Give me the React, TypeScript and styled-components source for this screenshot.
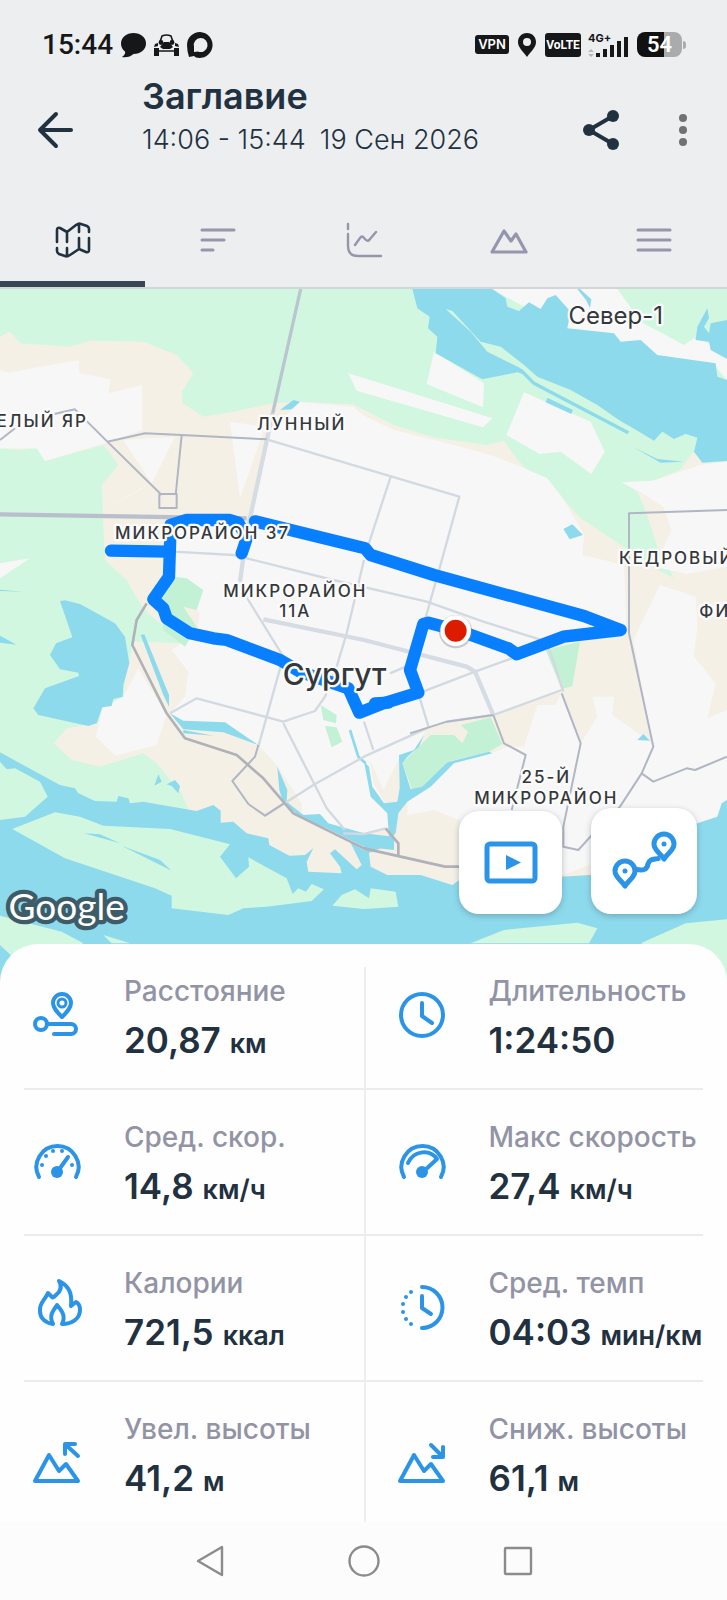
import React from 'react';
import styled, { createGlobalStyle } from 'styled-components';

const ink = '#22313f';
const muted = '#9294a6';
const blue = '#2b94e6';
const chrome = '#eceef0';

const GlobalStyle = createGlobalStyle`
  * { box-sizing: border-box; }
  body { margin: 0; background: #fff; font-family: Inter, "Noto Sans", sans-serif; color: ${ink}; }
  button { border: 0; padding: 0; background: none; font: inherit; color: inherit; cursor: pointer; }
  svg { display: block; }
  h1, p, dl, dt, dd { margin: 0; }
`;

const Screen = styled.div`
  display: flex;
  flex-direction: column;
  min-height: 100vh;
  background: #fff;
`;

/* ---------- status bar ---------- */

const StatusBar = styled.div`
  display: flex;
  align-items: center;
  justify-content: space-between;
  height: 72px;
  padding: 17px 41px 0 42px;
  background: ${chrome};
  color: #151719;
`;

const StatusGroup = styled.div<{ $gap: number }>`
  display: flex;
  align-items: center;
  gap: ${(p) => p.$gap}px;
`;

const Clock = styled.span`
  font: 500 28px/32px Roboto, sans-serif;
`;

const Badge = styled.span<{ $tall?: boolean }>`
  display: flex;
  align-items: center;
  justify-content: center;
  width: ${(p) => (p.$tall ? 36 : 34)}px;
  height: ${(p) => (p.$tall ? 24 : 19)}px;
  border-radius: 3px;
  background: #151719;
  color: #fff;
  font: ${(p) => (p.$tall ? '700 12px/24px Roboto' : '600 13px/19px Inter')}, sans-serif;
`;

const Signal = styled.div`
  display: flex;
  flex-direction: column;
  width: 42px;
  height: 24px;
  font: 700 11px/10px Inter, sans-serif;
`;

const SignalBars = styled.svg`
  flex: none;
  width: 42px;
  height: 22px;
  margin-top: -8px;
`;

const Battery = styled.div`
  display: flex;
  align-items: center;
  gap: 1px;
`;

const BatteryBody = styled.span`
  display: block;
  width: 45px;
  height: 25px;
  border-radius: 8px;
  background: linear-gradient(90deg, #111 60%, #a9abac 60%);
  color: #fff;
  font: 600 22px/25px Roboto, sans-serif;
  text-align: center;
`;

const BatteryTip = styled.span`
  width: 3px;
  height: 8px;
  border-radius: 0 3px 3px 0;
  background: #a9abac;
`;

/* ---------- header ---------- */

const Header = styled.header`
  display: flex;
  align-items: center;
  height: 116px;
  padding: 0 22px 0 33px;
  background: ${chrome};
`;

const Titles = styled.div`
  display: flex;
  flex: 1;
  flex-direction: column;
  align-self: flex-start;
  gap: 5px;
  padding: 2px 0 0 65px;
`;

const Title = styled.h1`
  font-size: 36px;
  font-weight: 600;
  line-height: 44px;
`;

const Subtitle = styled.p`
  display: flex;
  gap: 14px;
  font-size: 27px;
  font-weight: 300;
  line-height: 34px;
`;

const IconButton = styled.button`
  display: flex;
  align-items: center;
  justify-content: center;
  width: 44px;
  height: 44px;
`;

const HeaderActions = styled.div`
  display: flex;
  gap: 38px;
`;

/* ---------- tabs ---------- */

const Tabs = styled.nav`
  display: flex;
  border-bottom: 2px solid #d2d6d9;
  background: ${chrome};
`;

const Tab = styled.button<{ $active?: boolean }>`
  display: flex;
  flex: 1;
  justify-content: center;
  padding: 30px 0 19px;
  border-bottom: 6px solid ${(p) => (p.$active ? '#374555' : 'transparent')};
  color: ${(p) => (p.$active ? ink : '#9496aa')};
`;

/* ---------- map ---------- */

const MapArea = styled.section`
  position: relative;
  height: 695px;
  overflow: hidden;
`;

const MapSvg = styled.svg`
  width: 100%;
  height: 100%;
`;

const Place = styled.text`
  font-family: Inter, sans-serif;
  font-weight: 500;
  fill: #35383b;
  stroke: #fbfbfb;
  stroke-width: 14px;
  stroke-linejoin: round;
  paint-order: stroke;
`;

const District = styled(Place)`
  font-size: 51px;
  letter-spacing: 6px;
`;

const Town = styled(Place)<{ $city?: boolean }>`
  font-size: ${(p) => (p.$city ? 90 : 72)}px;
  font-weight: ${(p) => (p.$city ? 500 : 400)};
`;

const Brand = styled.text`
  font: 400 111px Lato, sans-serif;
  fill: #fff;
  stroke: #3d5c68;
  stroke-width: 26px;
  stroke-linejoin: round;
  paint-order: stroke;
`;

const MapActions = styled.div`
  position: absolute;
  right: 30px;
  bottom: 70px;
  display: flex;
  align-items: flex-end;
  gap: 29px;
`;

const MapButton = styled.button<{ $size: number }>`
  display: flex;
  align-items: center;
  justify-content: center;
  width: ${(p) => p.$size}px;
  height: ${(p) => p.$size}px;
  border-radius: 20px;
  background: #fff;
  color: ${blue};
  box-shadow: 0 2px 6px rgba(40, 60, 80, 0.3);
`;

/* ---------- stats ---------- */

const Sheet = styled.section`
  position: relative;
  margin-top: -40px;
  padding: 23px 24px 0;
  border-radius: 38px 38px 0 0;
  background: #fefefe;
`;

const StatGrid = styled.dl`
  display: grid;
  grid-template-columns: 1fr 1fr;
`;

const Stat = styled.div<{ $right: boolean; $first: boolean; $last: boolean }>`
  display: flex;
  align-items: flex-start;
  gap: 39px;
  padding: ${(p) => (p.$first ? 7 : 30)}px 0 ${(p) => (p.$last ? 22 : 26)}px ${(p) => (p.$right ? 28 : 5)}px;
  border-left: ${(p) => (p.$right ? '2px solid #eeeeee' : '0')};
  border-bottom: ${(p) => (p.$last ? '0' : '2px solid #ececec')};
`;

const StatIcon = styled.svg`
  flex: none;
  width: 56px;
  height: 60px;
  margin-top: 12px;
  fill: none;
  stroke: ${blue};
  stroke-width: 4;
  stroke-linecap: round;
  stroke-linejoin: round;
`;

const StatText = styled.div`
  display: flex;
  flex-direction: column;
  gap: 10px;
  white-space: nowrap;
`;

const StatLabel = styled.dt`
  color: ${muted};
  font-size: 28px;
  font-weight: 500;
  line-height: 34px;
`;

const StatValue = styled.dd`
  font-size: 35px;
  font-weight: 600;
  line-height: 44px;
`;

const Unit = styled.span`
  margin-left: 9px;
  font-size: 27px;
  line-height: 27px;
`;

/* ---------- system navigation ---------- */

const SystemNav = styled.nav`
  display: flex;
  flex: 1;
  align-items: center;
  justify-content: center;
  gap: 110px;
  min-height: 78px;
  background: #fcfcfc;
  color: #8b8b8b;
`;

const mountain = 'M6 57 L20 31 L30 47 L37 40 L49 57 Z';

const stats = [
  {
    label: 'Расстояние', value: '20,87', unit: 'км',
    icon: (
      <>
        <path d="M33 31 C28 26 24 22 24 17 A9 9 0 0 1 42 17 C42 22 38 26 33 31 Z" />
        <circle cx="33" cy="17" r="4" strokeWidth="3" />
        <circle cx="12" cy="38" r="6" />
        <path d="M18 38 H42 A4 4 0 0 1 42 48 H25" />
      </>
    ),
  },
  {
    label: 'Длительность', value: '1:24:50', unit: '',
    icon: (
      <>
        <circle cx="28" cy="29" r="21" />
        <path d="M28 17 V30 L38 37" />
      </>
    ),
  },
  {
    label: 'Сред. скор.', value: '14,8', unit: 'км/ч',
    icon: (
      <>
        <path d="M10 45 A21 21 0 1 1 47 45" />
        <circle cx="28" cy="40" r="6" fill={blue} stroke="none" />
        <path d="M29 39 L39 25" />
        <g fill={blue} stroke="none">
          <circle cx="13" cy="33" r="2" /><circle cx="17" cy="24" r="2" />
          <circle cx="24" cy="19" r="2" /><circle cx="33" cy="19" r="2" />
          <circle cx="43" cy="33" r="2" />
        </g>
      </>
    ),
  },
  {
    label: 'Макс скорость', value: '27,4', unit: 'км/ч',
    icon: (
      <>
        <path d="M10 45 A21 21 0 1 1 47 45" />
        <circle cx="28" cy="40" r="6" fill={blue} stroke="none" />
        <path d="M14 31 C20 18 36 17 43 27 L30 39" />
      </>
    ),
  },
  {
    label: 'Калории', value: '721,5', unit: 'ккал',
    icon: <path d="M30 1 C33 6 32 11 27 15 C25 17 24 18 23 17 L19 13 C16 20 10 23 11 31 C11 39 17 43 24 44 C20 36 23 32 28 25 C33 31 37 36 33 44 C44 44 51 38 51 30 C51 26 49 23 47 22 L42 26 C43 16 42 7 30 1 Z" transform="translate(0 2)" />,
  },
  {
    label: 'Сред. темп', value: '04:03', unit: 'мин/км',
    icon: (
      <>
        <path d="M28 9 A20 20 0 0 1 28 50" />
        <path d="M28 18 V30 L37 36" />
        <g fill={blue} stroke="none">
          <circle cx="17" cy="14" r="2" /><circle cx="12" cy="19" r="2" />
          <circle cx="9" cy="26" r="2" /><circle cx="9" cy="34" r="2" />
          <circle cx="12" cy="41" r="2" /><circle cx="17" cy="46" r="2" />
        </g>
      </>
    ),
  },
  {
    label: 'Увел. высоты', value: '41,2', unit: 'м',
    icon: (
      <>
        <path d={mountain} />
        <path d="M49 32 L37 21 M36 30 V20 H46" />
      </>
    ),
  },
  {
    label: 'Сниж. высоты', value: '61,1', unit: 'м',
    icon: (
      <>
        <path d={mountain} />
        <path d="M37 21 L48 32 M49 23 V33 H39" />
      </>
    ),
  },
];

const tabs = [
  {
    name: 'Карта',
    icon: <path strokeWidth="2.6" d="M6 24 V12 Q6 9 9 10 L16 14 L25 7 Q28 5 30 6 L36 8 Q38 9 38 11 V14 M16 14 V24 M28 6 V14 M28 20 V31 M38 20 V32 Q38 35 35 34 L28 31 L19 37 Q16 39 14 38 L8 36 Q6 35 6 33 V30 M16 30 V38" />,
  },
  { name: 'Отрезки', icon: <path strokeWidth="3" d="M6 12 H38 M6 22 H28 M6 32 H17" /> },
  {
    name: 'Графики',
    icon: <path strokeWidth="2.4" d="M6 6 V11 M6 16 V28 Q6 38 16 38 H39 M13 27 L18 20 Q20 17 22 20 L24 22 Q26 24 28 21 L34 14" />,
  },
  { name: 'Высота', icon: <path strokeWidth="3.2" d="M5 34 L17 13 L24 23 L29 16 L39 34 Z" /> },
  { name: 'Данные', icon: <path strokeWidth="3" d="M6 12 H38 M6 22 H38 M6 32 H38" /> },
];

function StatusIcons() {
  return (
    <StatusBar>
      <StatusGroup $gap={8}>
        <Clock>15:44</Clock>
        <svg width="25" height="26" viewBox="0 0 25 26" fill="currentColor">
          <path d="M12.5 1C19.500 1 25 5.500 25 11.500S19.500 22 12.500 22C10 24.500 5 26 1 25C4 23 4.500 21 4 19.500C1.500 17.500 0 15 0 11.500C0 5.500 5.500 1 12.500 1Z" />
        </svg>
        <svg width="25" height="22" viewBox="0 0 25 22" fill="currentColor">
          <path d="M6 8 L8 2 Q12.500 0 17 2 L19 8" fill="none" stroke="currentColor" strokeWidth="1.600" />
          <circle cx="7" cy="8.500" r="2.400" /><circle cx="18" cy="8.500" r="2.400" />
          <path d="M10 8 H15 L19 13 L16 15 H9 L6 13 Z M0 14 H5 V22 H0 Z M20 14 H25 V22 H20 Z M1 10 L4 9 V12 L0 13 Z M24 10 L21 9 V12 L25 13 Z" />
          <path d="M5 17 H20" stroke="currentColor" strokeWidth="1.500" />
        </svg>
        <svg width="26" height="26" viewBox="0 0 26 26" fill="currentColor">
          <path d="M13 0A13 13 0 1 1 9 25.500L7 24L2 25Q0 19 0 13A13 13 0 0 1 13 0Z" />
          <path d="M13.500 6A7 7 0 1 1 11 19.500L7 20L7 15A7 7 0 0 1 13.500 6Z" fill={chrome} />
        </svg>
      </StatusGroup>
      <StatusGroup $gap={7}>
        <Badge>VPN</Badge>
        <svg width="22" height="24" viewBox="0 0 22 24" fill="currentColor">
          <path fillRule="evenodd" d="M11 0C16.500 0 20 4 20 9C20 15 14 19 11 24C8 19 2 15 2 9C2 4 5.500 0 11 0ZM11 5A4 4 0 1 0 11 13A4 4 0 0 0 11 5Z" />
        </svg>
        <Badge $tall>VoLTE</Badge>
        <Signal>
          4G+
          <SignalBars viewBox="0 0 42 22" fill="currentColor">
            <path d="M8 18h4v4h-4zM15 14h4v8h-4zM22 10h4v12h-4zM29 6h4v16h-4zM36 2h4v20h-4z" />
            <path d="M0 17 L3 14 L6 17 M0 19 L3 22 L6 19" fill="#b5b7b9" />
          </SignalBars>
        </Signal>
        <Battery>
          <BatteryBody>54</BatteryBody>
          <BatteryTip />
        </Battery>
      </StatusGroup>
    </StatusBar>
  );
}

function RideMap() {
  return (
    <MapSvg viewBox="0 867 2181 2085" preserveAspectRatio="xMidYMin slice" role="img" aria-label="Карта маршрута, Сургут">
      <rect y="867" width="2181" height="2085" fill="#f5f0e5" />

      <g fill="#d2f7e1">
        <path d="M0 867H2181V1350L2076 1360L2040 1410L1960 1442L1866 1447L1912 1475L1940 1540L1972 1640L2022 1735L1975 1710L1870 1640L1742 1555L1700 1510L1640 1435L1585 1415L1545 1370L1512 1322L1460 1335L1300 1312L1180 1275L1092 1230L1060 1213L900 1205L820 1210L700 1235L610 1250L548 1210L545 1175L580 1120L530 1065L430 1025L270 1022L210 1040L60 1030L30 995L0 1010Z" />
        <path d="M0 1345L60 1350L110 1345L135 1383L310 1335L330 1360L355 1395L305 1455L315 1680L380 1740L420 1810L450 1845L560 1930L400 1925L375 2040L370 2100L290 2170L200 2185L162 2230L215 2280L300 2300L430 2260L465 2285L545 2380L570 2440L400 2480L0 2480Z" />
      </g>

      <g fill="#f7f7f7">
        <path d="M0 1110L25 1118L237 1080L238 1120L332 1138L325 1180L427 1155V1290L322 1327L135 1383L110 1345H0Z" />
        <path d="M370 1320L525 1310L455 1450ZM320 1525L440 1455L420 1470ZM690 1265L795 1280L720 1495ZM0 1690L90 1675L0 1735Z" />
        <path d="M900 1207L1060 1220L1092 1247L1182 1290L1362 1335L1472 1365L1562 1400L1642 1435L1692 1500L1752 1605L1747 1665L1872 1695L1880 1900L1640 1925L1685 2068L1482 2145L1340 2165L1280 2185L1272 2200L1240 2260L1195 2280L1150 2370L1110 2280L1120 2350L1150 2400L1170 2480L1092 2500L1020 2485L905 2440V2410L830 2295L780 2240L680 2190L540 2165L510 2140L555 2090L565 2015L515 1950L590 1900L600 1840L520 1730L525 1580L745 1560L800 1300Z" />
        <path d="M415 2005L500 2145L470 2235L345 2267L288 2210L307 2122L370 2090Z" />
        <path d="M1362 2290L1472 2260L1522 2240L1572 2240L1612 2115H1667L1684 2082L1742 2230L1792 2150L1777 2090H1842L1837 2145L1957 2230L1900 1920L1980 1755L2087 1790L2092 1880L2082 1970L2147 2050L2122 2155L2181 2130V2400L2152 2450L2092 2470L1690 2625L1377 2460L1302 2430L1222 2445V2400Z" />
        <path d="M1866 1447L1960 1442L2100 1395L2181 1385V1700L2060 1722L1965 1700L2015 1590L1990 1520L1920 1475Z" />
        <path d="M1045 1120L1477 1255L1449 1282L1070 1172ZM1302 1055L1452 1150L1449 1222L1280 1152ZM1572 1177L1772 1265L1814 1355L1774 1422L1682 1355L1619 1362L1519 1305Z" />
        <path d="M1477 867H1852L1922 965L2052 1035L2082 1015L2127 1030L2181 1070V1140L2147 1100L1972 1075L1922 1040L1712 1000Z" />
      </g>

      <g fill="#c3f1d6">
        <path d="M520 1730L560 1735L610 1770L590 1830L550 1820L590 1880L555 1940L490 1890L485 1790Z" />
        <path d="M962 2115L1010 2145L1008 2170L970 2160ZM975 2178L1010 2182L1027 2225L995 2242Z" />
        <path d="M1637 1950L1740 1925L1717 2058L1685 2068ZM1207 2290L1292 2205L1362 2205L1387 2230L1404 2195L1382 2175L1472 2152L1507 2232L1467 2255L1342 2285L1272 2360L1237 2370Z" />
      </g>

      <g fill="#8edaed">
        <path d="M1237 867L1252 925L1289 950L1284 985L1312 1010L1307 1060L1447 1138L1552 1117L1692 1165L1772 1215L1892 1280L1962 1322L1987 1295L2022 1317L2057 1302L2092 1313L2082 1355L2107 1388L2181 1383V1140L2152 1130L2147 1090L1972 1065L1922 1020L1862 1025L1842 1000L1702 985L1712 935L1667 885L1642 895L1622 927L1587 907L1557 933L1522 920L1517 895L1477 867Z" />
        <path d="M2122 925L2127 955L2112 980L2127 1000L2132 970L2181 960V1077L2132 1050L2127 1025L2087 1020L2092 980Z" />
        <path d="M1732 867H1740L1774 898L1770 925L1758 900ZM1642 1193L1719 1230L1714 1242L1637 1207ZM1690 1587L1717 1573L1749 1605L1709 1618ZM1897 1340L1972 1377L2052 1385L1982 1388ZM840 1230L880 1200L900 1205L875 1228Z" />
        <path d="M180 1803L195 1801L240 1812L345 1870L375 1910L388 1990L370 2055L368 2090L340 2097L335 2118L307 2122L290 2170L265 2178L115 2145L100 2125L135 2065L237 2028L235 2018L180 2008L150 1965L168 1930L217 1912ZM0 1907L50 1934L0 1928ZM0 1769L70 1775L0 1773Z" />
        <path d="M422 1905L433 1903L507 2085V2120L490 2085ZM510 2140L550 2162L675 2167L775 2235L670 2197L550 2188ZM550 2190L640 2207L550 2200ZM832 2300L862 2370L860 2405L910 2445L960 2442L985 2470L1092 2500L1182 2510V2550L1092 2540L980 2485L900 2450L850 2410L838 2370Z" />
        <path d="M0 2257L60 2290L180 2355L225 2365L235 2380L285 2403L350 2405L355 2388L385 2395L390 2410L430 2405L590 2433L640 2415L662 2432V2468L700 2465L740 2500L805 2515L808 2535L868 2567L915 2565L940 2545L920 2585L925 2615L1025 2620L1020 2600L990 2560L1005 2548L1070 2608L1085 2595L1050 2525L1107 2560L1112 2600L1162 2625L1262 2625L1357 2655L1392 2630L1682 2630L1772 2625L2020 2500L2092 2470L2152 2450L2165 2410L2181 2400V2952H0Z" />
        <path d="M1092 2285L1107 2300L1117 2360L1152 2410L1192 2405L1199 2365L1197 2265L1242 2250L1272 2205L1257 2240L1222 2270L1207 2290L1232 2368L1267 2360L1342 2287L1467 2255L1477 2260L1362 2290L1292 2360L1222 2405L1195 2440L1187 2500L1142 2545L1092 2565V2510L1167 2512L1162 2440L1112 2390Z" />
        <path d="M463 2357L475 2323L485 2345ZM500 2353L525 2340L540 2358L535 2380L515 2358ZM1912 2220L1930 2202L1950 2222Z" />
      </g>
      <path d="M1050 2190L1075 2270L1097 2290" fill="none" stroke="#8edaed" strokeWidth="8" />

      <g fill="#d2f7e1">
        <path d="M1337 927L1357 933L1442 1025L1502 1040L1572 1095L1612 1130L1712 1170L1792 1215L1892 1285L1882 1300L1652 1180L1592 1145L1562 1105L1462 1055L1412 995Z" />
        <path d="M0 2285L20 2308L45 2305L120 2345L143 2390L75 2450L0 2460ZM37 2487L165 2437L240 2450L310 2477L510 2487L690 2533L660 2570L708 2635L747 2600L745 2572L860 2635L878 2682L895 2665L918 2675L935 2652L972 2668L935 2703L800 2720L730 2725L685 2745L515 2725V2687L465 2665L195 2575Z" />
        <path d="M0 2747L185 2795L250 2830L80 2910L0 2835ZM310 2805L390 2830H335ZM997 2717L1025 2685L1065 2668L1107 2695L1112 2665L1187 2675L1195 2720L1092 2727ZM1412 2830L1512 2790L1732 2768L1792 2785L1767 2830ZM1922 2830L2057 2770L2181 2758V2952H2140L2050 2860Z" />
      </g>
      <path d="M1562 1110L1602 1150L1650 1175L1885 1298" fill="none" stroke="#8edaed" strokeWidth="10" />
      <path d="M252 2500L300 2503L360 2530L295 2512ZM365 2537L480 2580L515 2612L440 2575Z" fill="#8edaed" />

      <g fill="none" strokeLinejoin="round">
        <g stroke="#d2d9e1" strokeWidth="7">
          <path d="M800 1318L1092 1405L1378 1490L1320 1700L1275 1860M1172 1430L1105 1635M1092 1680L1040 1900L1010 2000L975 2090L945 2133L850 2165L590 2095L510 2140" />
          <path d="M520 1655L700 1665L1000 1740L1280 1805L1450 1865L1640 1925L1690 2075M720 1745L745 1800L850 1970L775 2240M795 2447L940 2355L1092 2270L1280 2185M850 2170L980 2425L1035 2490" />
          <path d="M1255 2080L1425 2015L1550 1970M1092 2165L1120 2250M1255 2080L1287 2185M1170 2020L1240 1990M1340 2165L1480 2145L1685 2070M1030 2500L1092 2502L1157 2485" />
        </g>
        <g stroke="#d5dce3" strokeWidth="13">
          <path d="M818 1240L740 1600L720 1745M790 1858L1092 1920L1400 2000L1425 2015L1480 2145" />
        </g>
        <path d="M902 867L818 1240" stroke="#b9c5cf" strokeWidth="10" />
        <path d="M0 1543L740 1555" stroke="#b9bfcc" strokeWidth="13" />
        <g stroke="#b0b6c4" strokeWidth="6">
          <path d="M0 1320L45 1285M160 1243L225 1228L322 1325L485 1485M322 1325L435 1300L545 1305L800 1318M545 1305L527 1485M478 1482H530V1524H478Z" />
          <path d="M775 2235L765 2270L697 2343L745 2412L795 2447L855 2408M1480 2145L1512 2230L1577 2265L1535 2430M1685 2080L1742 2230L1690 2480V2540L1735 2550L1780 2500L1860 2420L1925 2320L1960 2240L1887 1900V1540L2181 1530M1925 2320L1960 2345L2060 2305L2085 2310L2181 2270M1230 2200L1340 2165L1480 2145" />
        </g>
        <path d="M440 1810L410 1860L397 1935L500 2140L555 2215L710 2265L790 2335L880 2440L1092 2545L1335 2600H1385M1157 2485L1195 2530V2565" stroke="#b0b1b9" strokeWidth="8" />
      </g>

      <g fill="none" stroke="#077fff" strokeWidth="37" strokeLinecap="round" strokeLinejoin="round">
        <path d="M333 1652L505 1655M725 1660L740 1615L715 1568L690 1560H560L512 1575L507 1730L460 1798L490 1825L500 1855L570 1900L640 1915L680 1920L840 1980L900 2015L1045 2065L1078 2138L1150 2110L1255 2078L1230 2010L1270 1872L1285 1868L1380 1893L1525 1945L1550 1963L1690 1910L1862 1890L1752 1848L1302 1725L1112 1665L1095 1645L765 1564" />
        <path d="M1125 2110L1165 2108" />
      </g>
      <circle cx="1367" cy="1895" r="50" fill="#7d8a93" opacity=".4" />
      <circle cx="1367" cy="1892" r="46" fill="#fff" />
      <circle cx="1367" cy="1892" r="33" fill="#dc1c00" />

      <Town x="1847" y="972" textAnchor="middle">Север-1</Town>
      <Town $city x="1004" y="2055" textAnchor="middle">Сургут</Town>
      <District x="264" y="1280" textAnchor="end">ЕЛЫЙ ЯР</District>
      <District x="905" y="1290" textAnchor="middle">ЛУННЫЙ</District>
      <District x="608" y="1617" textAnchor="middle">МИКРОРАЙОН 37</District>
      <District x="886" y="1790" textAnchor="middle">МИКРОРАЙОН</District>
      <District x="886" y="1852" textAnchor="middle">11А</District>
      <District x="1857" y="1693">КЕДРОВЫЙ</District>
      <District x="2098" y="1850">ФИ</District>
      <District x="1639" y="2350" textAnchor="middle">25-Й</District>
      <District x="1639" y="2412" textAnchor="middle">МИКРОРАЙОН</District>
      <Brand x="200" y="2760" textAnchor="middle">Google</Brand>
    </MapSvg>
  );
}

export default function App() {
  return (
    <Screen>
      <GlobalStyle />
      <StatusIcons />
      <Header>
        <IconButton aria-label="Назад">
          <svg width="44" height="44" viewBox="0 0 44 44" fill="none" stroke="currentColor" strokeWidth="4" strokeLinecap="round" strokeLinejoin="round">
            <path d="M38 22 H7 M23 6 L7 22 L23 38" />
          </svg>
        </IconButton>
        <Titles>
          <Title>Заглавие</Title>
          <Subtitle>
            <span>14:06 - 15:44</span>
            <span>19 Сен 2026</span>
          </Subtitle>
        </Titles>
        <HeaderActions>
          <IconButton aria-label="Поделиться">
            <svg width="44" height="44" viewBox="0 0 44 44" fill="currentColor">
              <path d="M34 8 L10 22 L34 36" fill="none" stroke="currentColor" strokeWidth="4" />
              <circle cx="34" cy="8" r="6" /><circle cx="10" cy="22" r="6" /><circle cx="34" cy="36" r="6" />
            </svg>
          </IconButton>
          <IconButton aria-label="Ещё">
            <svg width="44" height="44" viewBox="0 0 44 44" fill="#707173">
              <circle cx="22" cy="10" r="4" /><circle cx="22" cy="22" r="4" /><circle cx="22" cy="34" r="4" />
            </svg>
          </IconButton>
        </HeaderActions>
      </Header>
      <Tabs>
        {tabs.map((tab, i) => (
          <Tab key={tab.name} $active={i === 0} aria-label={tab.name}>
            <svg width="44" height="44" viewBox="0 0 44 44" fill="none" stroke="currentColor" strokeLinecap="round" strokeLinejoin="round">
              {tab.icon}
            </svg>
          </Tab>
        ))}
      </Tabs>
      <MapArea>
        <RideMap />
        <MapActions>
          <MapButton $size={103} aria-label="Видео маршрута">
            <svg width="56" height="46" viewBox="0 0 56 46">
              <rect x="4" y="4" width="48" height="37" rx="3" fill="none" stroke="currentColor" strokeWidth="5" />
              <path d="M23 15 L38 22.500 L23 30 Z" fill="currentColor" />
            </svg>
          </MapButton>
          <MapButton $size={106} aria-label="Маршрут">
            <svg width="66" height="62" viewBox="0 0 66 62" fill="none" stroke="currentColor" strokeWidth="5" strokeLinejoin="round">
              <path d="M14 56 C9 49 4 47 4 41 A10 10 0 0 1 24 41 C24 47 19 49 14 56 Z" />
              <path d="M53 29 C48 22 43 20 43 14 A10 10 0 0 1 63 14 C63 20 58 22 53 29 Z" />
              <path d="M24 39 C32 41 36 40 37 34 C39 28 43 30 49 28" />
              <circle cx="14" cy="41" r="2.500" fill="currentColor" stroke="none" />
              <circle cx="53" cy="14" r="2.500" fill="currentColor" stroke="none" />
            </svg>
          </MapButton>
        </MapActions>
      </MapArea>
      <Sheet>
        <StatGrid>
          {stats.map((s, i) => (
            <Stat key={s.label} $right={i % 2 === 1} $first={i < 2} $last={i >= stats.length - 2}>
              <StatIcon viewBox="0 0 56 60" aria-hidden="true">{s.icon}</StatIcon>
              <StatText>
                <StatLabel>{s.label}</StatLabel>
                <StatValue>
                  {s.value}
                  {s.unit && <Unit>{s.unit}</Unit>}
                </StatValue>
              </StatText>
            </Stat>
          ))}
        </StatGrid>
      </Sheet>
      <SystemNav>
        <IconButton aria-label="Назад в системе">
          <svg width="44" height="44" viewBox="0 0 44 44" fill="none" stroke="currentColor" strokeWidth="2.400" strokeLinejoin="round">
            <path d="M10 22 L34 8 V36 Z" />
          </svg>
        </IconButton>
        <IconButton aria-label="Домой">
          <svg width="44" height="44" viewBox="0 0 44 44" fill="none" stroke="currentColor" strokeWidth="2.400">
            <circle cx="22" cy="22" r="14.500" />
          </svg>
        </IconButton>
        <IconButton aria-label="Недавние приложения">
          <svg width="44" height="44" viewBox="0 0 44 44" fill="none" stroke="currentColor" strokeWidth="2.400">
            <rect x="9" y="9" width="26" height="26" rx="1" />
          </svg>
        </IconButton>
      </SystemNav>
    </Screen>
  );
}
